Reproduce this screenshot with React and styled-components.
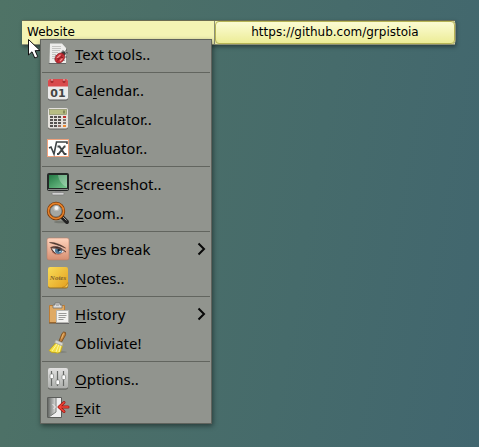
import React from "react";
import styled, { createGlobalStyle } from "styled-components";

const GlobalStyle = createGlobalStyle`
  * { box-sizing: border-box; }
  html { min-height: 100%; }
  body {
    margin: 0;
    min-height: 100vh;
    background: linear-gradient(100deg, #4f7366 0%, #4b6f68 28%, #466b6b 62%, #41666f 100%);
    color: #000;
  }
`;

const Desktop = styled.main`
  padding: 20px 24px 24px 22px;
`;

const NoteBar = styled.div`
  position: relative;
  display: grid;
  grid-template-columns: 193fr 240fr;
  height: 25px;
  border-top: 1px solid #6b6c52;
  border-bottom: 1px solid #8d9076;
  background: #f4f4b4;
  box-shadow: 1px 2px 4px rgba(0, 0, 0, 0.4);
  font: 12px/23px "DejaVu Sans", sans-serif;
`;

const NoteTitle = styled.span`
  padding-left: 5px;
  border-right: 1px solid #8d9076;
`;

const NoteLink = styled.a`
  height: 23px;
  border: 1px solid #b6b455;
  border-radius: 4px;
  background: linear-gradient(#fbfbd2, #f4f4b6 50%, #ecec96);
  box-shadow: 1px 0 0 #8d9076;
  color: #000;
  line-height: 21px;
  text-align: center;
  text-decoration: none;
  white-space: nowrap;
`;

const Pointer = styled.svg`
  position: absolute;
  left: 6px;
  top: 18px;
  z-index: 2;
`;

const Menu = styled.div`
  position: absolute;
  left: 18px;
  top: 18px;
  min-width: 172px;
  border: 1px solid #60635d;
  background: #91948e;
  box-shadow: 1px 2px 5px rgba(0, 0, 0, 0.45);
`;

const Separator = styled.hr`
  height: 1px;
  margin: 3px 1px;
  border: 0;
  background: #62655f;
`;

const MenuItem = styled.button`
  display: flex;
  align-items: center;
  gap: 6px;
  width: 100%;
  height: 29px;
  padding: 0 5px 1px 6px;
  border: 0;
  background: none;
  color: #000;
  font: 400 15px/28px "Noto Sans", sans-serif;
  text-align: left;
  white-space: nowrap;
  cursor: default;
  &:hover { background: #9da099; }
`;

const Label = styled.span`
  flex: 1;
`;

const Mnemonic = styled.u`
  text-decoration: underline 1px;
  text-underline-offset: 2px;
  text-decoration-skip-ink: none;
`;

const IconSvg = styled.svg`
  flex: none;
  overflow: visible;
`;

const Icon = ({ children }) => (
  <IconSvg width="22" height="22" viewBox="0 0 22 22" aria-hidden="true">{children}</IconSvg>
);

const TextToolsIcon = () => (
  <Icon>
    <path d="M3 .5h12l4 4.500V20H2.500z" fill="#ededeb" />
    <path d="M2 20h17v1H1.500z" fill="#666" />
    <path d="M5 3.500h9M5 5.500h9M5 7.500h8M5 9.500h6M5 11.500h4M5 13.500h3M5 15.500h3" stroke="#c4c4c1" />
    <path d="M8.500 12.500l2 .5M7.500 16h2M15 8.500l.5 2M20 14h-2M17.500 18l-1.500-1.500M21 10l-2-.5M19.500 6.500l-1 2M15.500 7l1.500 1.500" stroke="#4a4a4a" strokeWidth=".8" />
    <circle cx="16.500" cy="10.500" r="2.300" fill="#3b3b3b" />
    <ellipse cx="12.800" cy="15" rx="4.300" ry="5.500" transform="rotate(40 12.800 15)" fill="#cb3138" stroke="#7b1c20" strokeWidth=".6" />
    <path d="M15.800 11.500L9.800 18.800" stroke="#8c1a20" strokeWidth=".8" />
    <path d="M10 15l3.500-3.200M13 18l2.500-2.500" stroke="#ee9391" strokeWidth="1.200" />
    <circle cx="11" cy="15.800" r=".7" fill="#64161a" /><circle cx="15" cy="14.500" r=".7" fill="#64161a" />
  </Icon>
);

const CalendarIcon = () => (
  <Icon>
    <rect x="1" y="1" width="20" height="20.500" rx="2" fill="#555" />
    <rect x="1" y="0" width="20" height="20.500" rx="2" fill="#ebebeb" />
    <path d="M1 7.500V2q0-2 2-2h16q2 0 2 2v5.500z" fill="#d94b4d" />
    <circle cx="5" cy="2.500" r="1.500" fill="#a52b2e" /><circle cx="17" cy="2.500" r="1.500" fill="#a52b2e" />
    <path d="M5 0v2M17 0v2" stroke="#e9c6c6" />
    <text x="11" y="17.500" textAnchor="middle" fontFamily="DejaVu Sans" fontWeight="700" fontSize="11" fill="#444">01</text>
  </Icon>
);

const CalculatorIcon = () => (
  <Icon>
    <rect x="1" y="1" width="20" height="20.500" rx="2" fill="#62615d" />
    <rect x="1" y="0" width="20" height="20.500" rx="2" fill="#e4e1dc" />
    <rect x="2.500" y="1.500" width="17" height="5" fill="#b7bd83" stroke="#8d926a" strokeWidth=".7" />
    <path d="M17 2.500v3" stroke="#737a4c" strokeWidth="1.500" />
    {[9, 12, 15, 18].map((y) => (
      <g key={y} fill="#55524f">
        <rect x="3" y={y - 1} width="3" height="2" /><rect x="7" y={y - 1} width="3" height="2" />
        <rect x="11" y={y - 1} width="3" height="2" fill={y === 18 ? "#977267" : "#55524f"} />
        <rect x="16" y={y - 1} width="3" height="2" fill={y === 9 ? "#bd302b" : y === 18 ? "#ef8b32" : "#817772"} />
      </g>
    ))}
  </Icon>
);

const EvaluatorIcon = () => (
  <Icon>
    <rect x=".5" y="2.500" width="21" height="17" fill="#fff" stroke="#f0a27d" />
    <path d="M2 11l2-1 3 7L9.500 5H20v2" fill="none" stroke="#3f4547" strokeWidth="1.600" />
    <path d="M10.500 9.500h2l5 7.500h2M18.500 9.500h-1l-6 7.500h-1.500" fill="none" stroke="#3f4547" strokeWidth="1.900" />
  </Icon>
);

const ScreenshotIcon = () => (
  <Icon>
    <defs><linearGradient id="screen" x2="1" y2="1"><stop stopColor="#237944" /><stop offset="1" stopColor="#79c890" /></linearGradient></defs>
    <path d="M8 17h6v3H8z" fill="#8a8a8a" />
    <rect x="5" y="19.500" width="12" height="2.500" rx="1" fill="#d2d2d2" stroke="#777" strokeWidth=".6" />
    <rect x="0" y="0" width="22" height="18" rx="2" fill="#252827" />
    <path d="M1 16.500h20" stroke="#858886" />
    <rect x="2" y="2" width="18" height="13" fill="url(#screen)" />
    <path d="M11 2h9v12c-5-2-8-6-9-12z" fill="#fff" opacity=".26" />
  </Icon>
);

const ZoomIcon = () => (
  <Icon>
    <ellipse cx="14" cy="20" rx="7" ry="1.300" fill="#777a73" />
    <path d="M14.500 14.500l5.500 5.500" stroke="#222" strokeWidth="4" strokeLinecap="round" />
    <path d="M15.500 14.500l4 4" stroke="#9b9b9b" strokeWidth="1" />
    <circle cx="9" cy="9" r="7.600" fill="#a8aaa5" stroke="#7b3907" strokeWidth="3.200" />
    <circle cx="9" cy="9" r="7.600" fill="none" stroke="#e5822b" strokeWidth="1.600" />
    <circle cx="9" cy="9" r="5.800" fill="#a4a6a1" stroke="#696c69" strokeWidth=".7" />
    <circle cx="9.500" cy="6" r="2" fill="#f2f2f1" /><circle cx="9.500" cy="6" r="3.200" fill="#fff" opacity=".28" />
  </Icon>
);

const EyeIcon = () => (
  <Icon>
    <defs><linearGradient id="skin" x2="0" y2="1"><stop stopColor="#ffd4bd" /><stop offset="1" stopColor="#d78e70" /></linearGradient></defs>
    <rect x="0" y="0" width="22" height="22" rx="2" fill="url(#skin)" stroke="#b57c68" strokeWidth=".6" />
    <path d="M4 10q5-4 10-.5 3 1 4 4-4 3-8 2-4-1-6-5.500z" fill="#e9e7e7" />
    <circle cx="11.500" cy="12.500" r="3.500" fill="#4d7897" /><circle cx="12" cy="12" r="1.500" fill="#182734" />
    <circle cx="13" cy="13.500" r=".8" fill="#d8f0fb" />
    <path d="M3.500 9.500Q11 6 19 14q-7-5-15-4M4 10q1 4 5 6" fill="#382521" stroke="#684033" strokeWidth=".8" />
    <path d="M2.500 4.500Q10 4 18.500 10 10 6.500 2.500 4.500" fill="#35241f" stroke="#5c4237" strokeWidth=".6" />
    <path d="M5 14q6 5 12 0" fill="none" stroke="#ac5c4b" strokeWidth=".6" />
  </Icon>
);

const NotesIcon = () => (
  <Icon>
    <defs><linearGradient id="paper" x2="1" y2="1"><stop stopColor="#f9dc57" /><stop offset="1" stopColor="#e4a020" /></linearGradient></defs>
    <rect x="1" y="1" width="20" height="20.500" rx="2" fill="#8f6f2b" />
    <rect x="1" y="0" width="20" height="20.500" rx="2" fill="url(#paper)" />
    <path d="M15 20.500q4 0 6-5v3q0 2-2 2z" fill="#f7d463" stroke="#b3791a" strokeWidth=".6" />
    <text x="11" y="12.500" textAnchor="middle" fontFamily="Liberation Serif" fontStyle="italic" fontWeight="700" fontSize="7" fill="#80622c">Notes</text>
  </Icon>
);

const HistoryIcon = () => (
  <Icon>
    <rect x="2" y="2" width="16" height="18" rx="1" fill="#bc7c34" />
    <rect x="3" y="3" width="14" height="16" fill="#dfaa65" />
    <path d="M2 20h9" stroke="#74502a" />
    <path d="M6 5V2h2V0h5v2h2v3z" fill="#dedede" stroke="#71716f" strokeWidth=".8" />
    <path d="M9 2h3" stroke="#878787" />
    <path d="M9.500 7.500h12v12h-12z" fill="#f3f3f1" stroke="#b6b6b2" />
    <path d="M9 20.500h13" stroke="#666" />
    <path d="M11.500 10.500h8M11.500 12.500h8M11.500 14.500h7M11.500 16.500h5" stroke="#9a9a98" />
  </Icon>
);

const BroomIcon = () => (
  <Icon>
    <ellipse cx="12" cy="20" rx="8" ry="1.200" fill="#80837c" />
    <path d="M12 9L15 1.500q1.500-2.500 3.500-1 .5 2-.5 3.500L14.500 10z" fill="#c2803b" stroke="#754718" strokeWidth=".8" />
    <path d="M16.500 1.500l-2 5" stroke="#edbd73" />
    <path d="M9.500 10L2 18.500q3 3 6 2 3 1.500 5.500-.500L16 12z" fill="#f4df43" stroke="#c0a219" strokeWidth=".8" />
    <path d="M10 12l-5 7M12 12l-3 8M14 12l-2 8" stroke="#fff6a0" />
    <path d="M9 8l7 3-.5 3-8-3.500z" fill="#d5d5d1" stroke="#9b9b95" strokeWidth=".7" />
  </Icon>
);

const OptionsIcon = () => (
  <Icon>
    <defs><linearGradient id="panel" x2="0" y2="1"><stop stopColor="#e2e2e1" /><stop offset="1" stopColor="#acaeab" /></linearGradient></defs>
    <rect x="1" y="1" width="20" height="20.500" rx="2" fill="#555753" />
    <rect x="1" y="0" width="20" height="20.500" rx="2" fill="url(#panel)" />
    <path d="M4.500 3v15M10.500 3v15M16.500 3v15" stroke="#666966" strokeWidth="1.200" />
    <g fill="#fff" stroke="#70736f" strokeWidth=".6"><rect x="3" y="6" width="3.500" height="4.500" rx="1" /><rect x="9" y="12" width="3.500" height="4.500" rx="1" /><rect x="15" y="7" width="3.500" height="4.500" rx="1" /></g>
  </Icon>
);

const ExitIcon = () => (
  <Icon>
    <defs><linearGradient id="door"><stop stopColor="#666966" /><stop offset="1" stopColor="#dedfdd" /></linearGradient></defs>
    <path d="M.5.500h14v20H.500z" fill="#efefef" stroke="#5b5d5a" />
    <path d="M1 1h8v14l-7 5H1z" fill="url(#door)" />
    <path d="M9 1v14l-7 5" stroke="#777a76" fill="none" />
    <path d="M5.500 7l3 3-2 2" stroke="#eee" fill="none" />
    <path d="M17 5.500L12 10l5 4.500M12.500 10H21" fill="none" stroke="#9c1712" strokeWidth="3" strokeLinecap="round" strokeLinejoin="round" />
    <path d="M17 5.500L12 10l5 4.500M12.500 10H21" fill="none" stroke="#ef4538" strokeWidth="1.600" strokeLinecap="round" strokeLinejoin="round" />
  </Icon>
);

const Chevron = () => (
  <IconSvg width="9" height="14" viewBox="0 0 9 14" aria-hidden="true">
    <path d="M1.500 1.500L7 7l-5.500 5.500" fill="none" stroke="#080808" strokeWidth="2" />
  </IconSvg>
);

const groups = [
  [{ icon: TextToolsIcon, key: "T", after: "ext tools.." }],
  [
    { icon: CalendarIcon, before: "Ca", key: "l", after: "endar.." },
    { icon: CalculatorIcon, key: "C", after: "alculator.." },
    { icon: EvaluatorIcon, before: "E", key: "v", after: "aluator.." },
  ],
  [
    { icon: ScreenshotIcon, key: "S", after: "creenshot.." },
    { icon: ZoomIcon, key: "Z", after: "oom.." },
  ],
  [
    { icon: EyeIcon, key: "E", after: "yes break", submenu: true },
    { icon: NotesIcon, key: "N", after: "otes.." },
  ],
  [
    { icon: HistoryIcon, key: "H", after: "istory", submenu: true },
    { icon: BroomIcon, after: "Obliviate!" },
  ],
  [
    { icon: OptionsIcon, key: "O", after: "ptions.." },
    { icon: ExitIcon, key: "E", after: "xit" },
  ],
];

export default function App() {
  return (
    <>
      <GlobalStyle />
      <Desktop>
        <NoteBar>
          <NoteTitle>Website</NoteTitle>
          <NoteLink href="https://github.com/grpistoia">https://github.com/grpistoia</NoteLink>
          <Menu role="menu">
            {groups.map((items, index) => (
              <React.Fragment key={index}>
                {index > 0 && <Separator />}
                {items.map(({ icon: ItemIcon, before, key, after, submenu }) => (
                  <MenuItem key={after} type="button" role="menuitem" aria-haspopup={submenu ? "menu" : undefined}>
                    <ItemIcon />
                    <Label>{before}{key && <Mnemonic>{key}</Mnemonic>}{after}</Label>
                    {submenu && <Chevron />}
                  </MenuItem>
                ))}
              </React.Fragment>
            ))}
          </Menu>
          <Pointer width="13" height="21" viewBox="0 0 13 21" aria-hidden="true">
            <path d="M.5.500V16l3.500-3.200L6.800 19l3-1.300-2.700-6L12 11.500z" fill="#fff" stroke="#111" />
          </Pointer>
        </NoteBar>
      </Desktop>
    </>
  );
}
